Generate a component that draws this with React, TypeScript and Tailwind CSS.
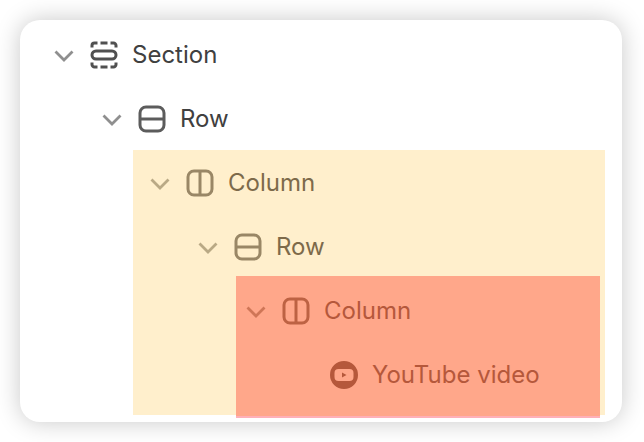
import React from 'react';

const Chevron = ({ className }: { className: string }) => (
  <svg viewBox="0 0 24 24" fill="none" className={`w-6 h-6 shrink-0 ${className}`}>
    <path d="M3.500 8.500 12 17l8.500-8.500" stroke="currentColor" strokeWidth="2.8" />
  </svg>
);

const SectionIcon = ({ className }: { className: string }) => (
  <svg viewBox="0 0 28 28" fill="none" stroke="currentColor" strokeWidth="3" className={`w-7 h-7 shrink-0 ${className}`}>
    <path d="M2 6.500V4.500A2.500 2.500 0 0 1 4.500 2H7.500M10.500 2h7M20.500 2h3A2.500 2.500 0 0 1 26 4.500V6.500" />
    <path d="M2 21.500v2A2.500 2.500 0 0 0 4.500 26H7.500M10.500 26h7M20.500 26h3a2.500 2.500 0 0 0 2.500-2.500v-2" />
    <rect x="2" y="10" width="24" height="8" rx="4" />
  </svg>
);

const RowIcon = ({ className }: { className: string }) => (
  <svg viewBox="0 0 28 28" fill="none" stroke="currentColor" strokeWidth="3" className={`w-7 h-7 shrink-0 ${className}`}>
    <rect x="2" y="2" width="24" height="24" rx="6" />
    <path d="M2 14h24" />
  </svg>
);

const ColumnIcon = ({ className }: { className: string }) => (
  <svg viewBox="0 0 28 28" fill="none" stroke="currentColor" strokeWidth="3" className={`w-7 h-7 shrink-0 ${className}`}>
    <rect x="2" y="2" width="24" height="24" rx="6" />
    <path d="M14 2v24" />
  </svg>
);

const YoutubeIcon = ({ className }: { className: string }) => (
  <svg viewBox="0 0 28 28" className={`w-7 h-7 shrink-0 ${className}`}>
    <path
      fill="currentColor"
      fillRule="evenodd"
      d="M14 0a14 14 0 1 1 0 28 14 14 0 0 1 0-28ZM8.500 8a4 4 0 0 0-4 4v4a4 4 0 0 0 4 4h11a4 4 0 0 0 4-4v-4a4 4 0 0 0-4-4Z"
    />
    <path fill="currentColor" d="M12 11.500v5l4.500-2.500Z" />
  </svg>
);

const TreeRow = ({ className, children }: { className: string; children: React.ReactNode }) => (
  <div className={`h-16 pt-[2px] flex items-center shrink-0 ${className}`}>{children}</div>
);

export default function App() {
  return (
    <div className="w-[644px] h-[442px] bg-white pt-5 pl-5 font-['Inter',sans-serif] text-[24px]">
      <div className="w-[602px] h-[402px] rounded-[20px] bg-white pt-[2px] shadow-[0_0_24px_rgba(0,0,0,0.22)] flex flex-col">
        <TreeRow className="pl-8 text-[#404040]">
          <Chevron className="text-[#8f8f8f]" />
          <SectionIcon className="ml-[14px] text-[#505050]" />
          <span className="ml-[14px]">Section</span>
        </TreeRow>
        <TreeRow className="pl-20 text-[#404040]">
          <Chevron className="text-[#8f8f8f]" />
          <RowIcon className="ml-[14px] text-[#5c5c5c]" />
          <span className="ml-[14px]">Row</span>
        </TreeRow>

        {/* Column highlight */}
        <div className="ml-[113px] w-[472px] h-[265px] bg-[#ffefcc]">
          <TreeRow className="pl-[15px] text-[#7d6a4a]">
            <Chevron className="text-[#b9a985]" />
            <ColumnIcon className="ml-[14px] text-[#998766]" />
            <span className="ml-[14px]">Column</span>
          </TreeRow>
          <TreeRow className="pl-[63px] text-[#7d6a4a]">
            <Chevron className="text-[#b9a985]" />
            <RowIcon className="ml-[14px] text-[#998766]" />
            <span className="ml-[14px]">Row</span>
          </TreeRow>

          {/* Nested column highlight */}
          <div className="ml-[103px] -mt-[2px] pt-[2px] w-[364px] h-[142px] bg-[#ffa78a] border-b-2 border-[#ffb0b8]">
            <TreeRow className="pl-2 text-[#b5583b]">
              <Chevron className="text-[#cf7657]" />
              <ColumnIcon className="ml-[14px] text-[#bd6243]" />
              <span className="ml-[14px]">Column</span>
            </TreeRow>
            <TreeRow className="pl-[94px] text-[#b5583b]">
              <YoutubeIcon className="text-[#b5583b]" />
              <span className="ml-[14px]">YouTube video</span>
            </TreeRow>
          </div>
        </div>
      </div>
    </div>
  );
}
